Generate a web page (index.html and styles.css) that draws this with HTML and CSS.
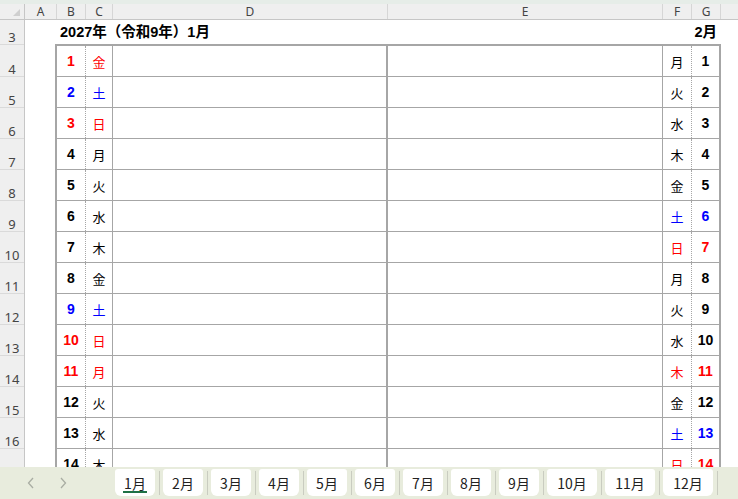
FILE: index.html
```html
<!DOCTYPE html>
<html lang="ja">
<head>
<meta charset="utf-8">
<link rel="stylesheet" href="styles.css">
</head>
<body>
<div class="app">
  <div class="topstrip"></div>
  <div class="colhdr">
    <div class="ch corner"><span class="tri"></span></div>
    <div class="ch w-a">A</div>
    <div class="ch w-b">B</div>
    <div class="ch w-c">C</div>
    <div class="ch w-d">D</div>
    <div class="ch w-e">E</div>
    <div class="ch w-f">F</div>
    <div class="ch w-g">G</div>
    <div class="ch rest"></div>
  </div>
  <div class="sheet">
    <div class="rowhdr">
      <div class="rh r3">3</div>
      <div class="rh r4">4</div>
      <div class="rh">5</div>
      <div class="rh">6</div>
      <div class="rh">7</div>
      <div class="rh">8</div>
      <div class="rh">9</div>
      <div class="rh">10</div>
      <div class="rh">11</div>
      <div class="rh">12</div>
      <div class="rh">13</div>
      <div class="rh">14</div>
      <div class="rh">15</div>
      <div class="rh">16</div>
      <div class="rh"></div>
    </div>
    <div class="content">
      <div class="title-row"><span>2027年（令和9年）1月</span><span>2月</span></div>
      <div class="cal">
        <div class="row"><div class="num red">1</div><div class="day red">金</div><div class="memo-d"></div><div class="memo-e"></div><div class="day2">月</div><div class="num2">1</div></div>
        <div class="row"><div class="num blue">2</div><div class="day blue">土</div><div class="memo-d"></div><div class="memo-e"></div><div class="day2">火</div><div class="num2">2</div></div>
        <div class="row"><div class="num red">3</div><div class="day red">日</div><div class="memo-d"></div><div class="memo-e"></div><div class="day2">水</div><div class="num2">3</div></div>
        <div class="row"><div class="num">4</div><div class="day">月</div><div class="memo-d"></div><div class="memo-e"></div><div class="day2">木</div><div class="num2">4</div></div>
        <div class="row"><div class="num">5</div><div class="day">火</div><div class="memo-d"></div><div class="memo-e"></div><div class="day2">金</div><div class="num2">5</div></div>
        <div class="row"><div class="num">6</div><div class="day">水</div><div class="memo-d"></div><div class="memo-e"></div><div class="day2 blue">土</div><div class="num2 blue">6</div></div>
        <div class="row"><div class="num">7</div><div class="day">木</div><div class="memo-d"></div><div class="memo-e"></div><div class="day2 red">日</div><div class="num2 red">7</div></div>
        <div class="row"><div class="num">8</div><div class="day">金</div><div class="memo-d"></div><div class="memo-e"></div><div class="day2">月</div><div class="num2">8</div></div>
        <div class="row"><div class="num blue">9</div><div class="day blue">土</div><div class="memo-d"></div><div class="memo-e"></div><div class="day2">火</div><div class="num2">9</div></div>
        <div class="row"><div class="num red">10</div><div class="day red">日</div><div class="memo-d"></div><div class="memo-e"></div><div class="day2">水</div><div class="num2">10</div></div>
        <div class="row"><div class="num red">11</div><div class="day red">月</div><div class="memo-d"></div><div class="memo-e"></div><div class="day2 red">木</div><div class="num2 red">11</div></div>
        <div class="row"><div class="num">12</div><div class="day">火</div><div class="memo-d"></div><div class="memo-e"></div><div class="day2">金</div><div class="num2">12</div></div>
        <div class="row"><div class="num">13</div><div class="day">水</div><div class="memo-d"></div><div class="memo-e"></div><div class="day2 blue">土</div><div class="num2 blue">13</div></div>
        <div class="row last"><div class="num">14</div><div class="day">木</div><div class="memo-d"></div><div class="memo-e"></div><div class="day2 red">日</div><div class="num2 red">14</div></div>
      </div>
    </div>
  </div>
  <div class="tabbar">
    <div class="nav">
      <svg class="chev" width="8" height="12" viewBox="0 0 8 12"><path d="M6 1 L1.5 6 L6 11" fill="none" stroke="#a9ada3" stroke-width="1.3"/></svg>
      <svg class="chev" width="8" height="12" viewBox="0 0 8 12"><path d="M2 1 L6.5 6 L2 11" fill="none" stroke="#a9ada3" stroke-width="1.3"/></svg>
    </div>
    <div class="tab active">1月</div><div class="sep"></div>
    <div class="tab">2月</div><div class="sep"></div>
    <div class="tab">3月</div><div class="sep"></div>
    <div class="tab">4月</div><div class="sep"></div>
    <div class="tab">5月</div><div class="sep"></div>
    <div class="tab">6月</div><div class="sep"></div>
    <div class="tab">7月</div><div class="sep"></div>
    <div class="tab">8月</div><div class="sep"></div>
    <div class="tab">9月</div><div class="sep"></div>
    <div class="tab wide">10月</div><div class="sep"></div>
    <div class="tab wide">11月</div><div class="sep"></div>
    <div class="tab wide">12月</div><div class="sep"></div>
  </div>
</div>
</body>
</html>
```
FILE: styles.css
```css
* { box-sizing: border-box; }
html, body { margin: 0; padding: 0; }
body {
  width: 738px;
  height: 499px;
  overflow: hidden;
  background: #fff;
  font-family: "Liberation Sans", "Noto Sans CJK JP", sans-serif;
}
.app {
  width: 738px;
  height: 499px;
  display: flex;
  flex-direction: column;
  overflow: hidden;
}
.topstrip {
  height: 4px;
  background: #e6ede8;
  flex: none;
}
.colhdr {
  height: 16px;
  flex: none;
  display: flex;
  background: #efefef;
  border-bottom: 1px solid #c6c6c6;
}
.ch {
  height: 15px;
  border-right: 1px solid #d6d6d6;
  font-family: "Noto Sans", "Liberation Sans", sans-serif;
  font-size: 12px;
  line-height: 15px;
  color: #444;
  text-align: center;
  flex: none;
}
.corner { width: 25px; position: relative; border-right-color: #c6c6c6; }
.tri {
  position: absolute;
  right: 4px;
  bottom: 3px;
  width: 0;
  height: 0;
  border-left: 7px solid transparent;
  border-bottom: 7px solid #cfcfcf;
}
.w-a { width: 32px; }
.w-b { width: 29px; }
.w-c { width: 27px; }
.w-d { width: 275px; }
.w-e { width: 275px; }
.w-f { width: 29px; }
.w-g { width: 29px; }
.rest { flex: 1; border-right: none; }

.sheet {
  flex: none;
  height: 447px;
  display: flex;
  overflow: hidden;
}
.rowhdr {
  width: 25px;
  flex: none;
  background: #efefef;
  border-right: 1px solid #c6c6c6;
}
.rh {
  height: 31px;
  border-bottom: 1px solid #dadada;
  display: flex;
  align-items: flex-end;
  justify-content: center;
  font-family: "Noto Sans", "Liberation Sans", sans-serif;
  font-size: 13px;
  line-height: 13px;
  padding-bottom: 0;
  color: #444;
}
.rh.r3 { height: 25px; }
.rh.r4 { height: 32px; }

.content {
  flex: 1;
  min-width: 0;
}
.title-row {
  height: 24px;
  width: 666px;
  margin-left: 30px;
  padding: 0 4px 4px 5px;
  display: flex;
  justify-content: space-between;
  align-items: center;
  font-weight: bold;
  font-size: 14.5px;
  color: #000;
}
.cal {
  width: 666px;
  margin-left: 30px;
  border: 2px solid #a6a6a6;
  border-bottom: none;
}
.row {
  display: grid;
  grid-template-columns: 29px 27px 275px 275px 29px 27px;
  height: 31px;
  border-bottom: 1px solid #a6a6a6;
}
.row > div {
  display: flex;
  align-items: center;
  justify-content: center;
  height: 30px;
}
.num, .num2 {
  font-weight: bold;
  font-size: 14px;
  color: #000;
}
.day, .day2 {
  font-family: "Noto Sans CJK JP", sans-serif;
  font-size: 13px;
  color: #000;
}
.num { border-right: 1px dotted #a6a6a6; }
.day { border-right: 1px solid #a6a6a6; }
.memo-d { border-right: 2px solid #a6a6a6; }
.memo-e { border-right: 1px solid #a6a6a6; }
.day2 { border-right: 1px dotted #a6a6a6; }
.red { color: #ff0000 !important; }
.blue { color: #0000ff !important; }

.tabbar {
  flex: 1;
  background: #e8ecdd;
  display: flex;
  align-items: flex-start;
  padding-top: 2px;
}
.nav {
  width: 115px;
  height: 27px;
  flex: none;
  display: flex;
  align-items: center;
  padding-left: 27px;
  gap: 24px;
}
.tab {
  width: 40px;
  height: 27px;
  flex: none;
  background: #fff;
  border-radius: 3px 3px 6px 6px;
  display: flex;
  align-items: center;
  justify-content: center;
  font-family: "Noto Sans CJK JP", sans-serif;
  font-size: 14px;
  color: #222;
  position: relative;
}
.tab.wide { width: 50px; }
.tab.active::after {
  content: "";
  position: absolute;
  left: 8px;
  right: 8px;
  bottom: 3px;
  height: 2px;
  background: #1e7145;
}
.sep {
  width: 8px;
  height: 27px;
  flex: none;
  display: flex;
  justify-content: center;
  align-items: center;
}
.sep::before {
  content: "";
  width: 1px;
  height: 24px;
  background: #c9ccc0;
}
```
